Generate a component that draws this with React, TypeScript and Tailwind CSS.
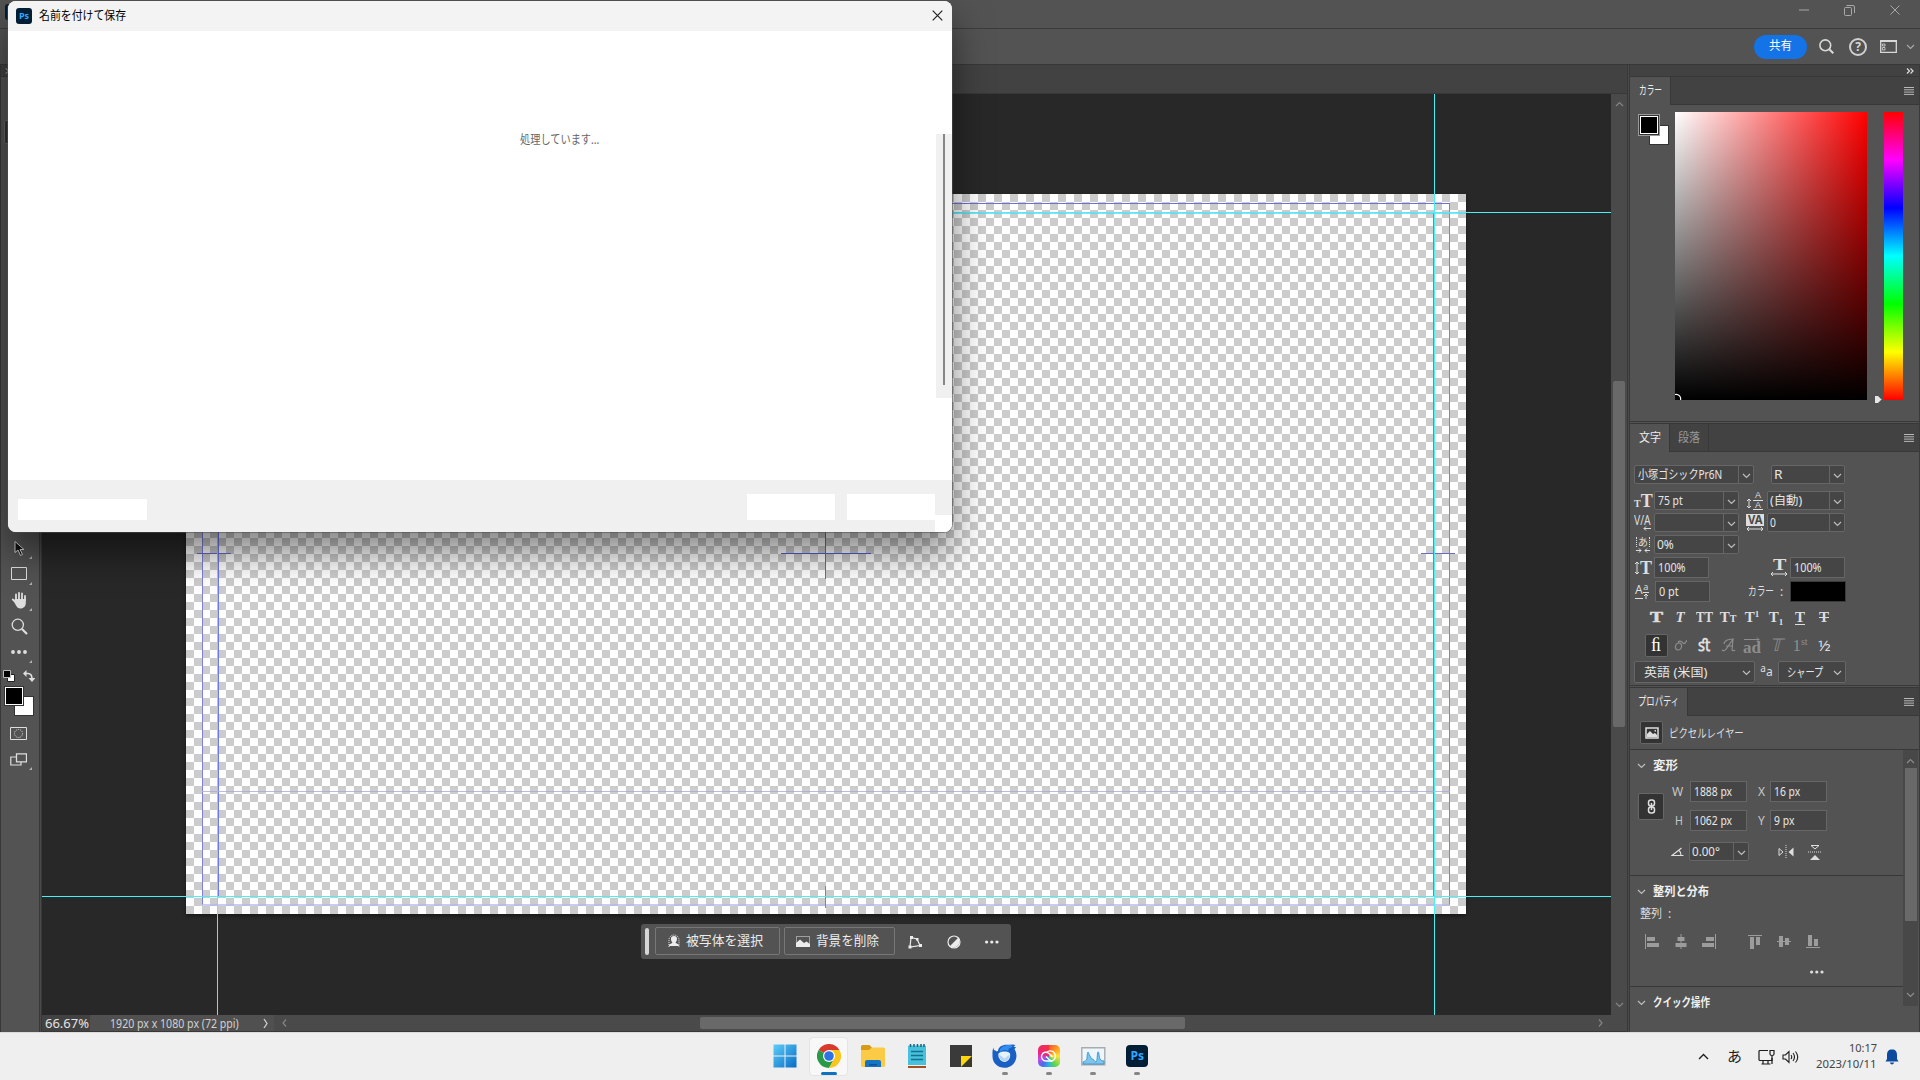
import { useLayoutEffect, useRef, useState } from "react";
import type { ReactNode } from "react";
import clsx from "clsx";

// Single line of text, condensed or stretched to a fixed width.
function Fit({
  w,
  className,
  children,
}: {
  w: number;
  className?: string;
  children: ReactNode;
}) {
  const ref = useRef<HTMLSpanElement>(null);
  const [scale, setScale] = useState(1);

  useLayoutEffect(() => {
    if (ref.current) setScale(w / ref.current.offsetWidth);
  }, [w]);

  return (
    <span
      className={clsx("inline-block shrink-0 whitespace-nowrap", className)}
      style={{ width: w }}
    >
      <span
        ref={ref}
        className="inline-block origin-left"
        style={{ transform: `scaleX(${scale})` }}
      >
        {children}
      </span>
    </span>
  );
}

function Icon({
  w,
  h,
  className,
  children,
}: {
  w: number;
  h: number;
  className?: string;
  children: ReactNode;
}) {
  return (
    <svg
      width={w}
      height={h}
      viewBox={`0 0 ${w} ${h}`}
      fill="none"
      stroke="currentColor"
      className={clsx("block shrink-0", className)}
    >
      {children}
    </svg>
  );
}

function Chevron({ className, up }: { className?: string; up?: boolean }) {
  return (
    <Icon w={9} h={6} className={className}>
      <path d={up ? "M1 5 4.5 1.5 8 5" : "M1 1 4.5 4.5 8 1"} strokeWidth="1.2" />
    </Icon>
  );
}

function PsLogo({ className }: { className?: string }) {
  return (
    <div
      className={clsx(
        "flex items-center justify-center bg-[#001e36] font-['Open_Sans',sans-serif] font-bold text-[#31a8ff]",
        className,
      )}
    >
      Ps
    </div>
  );
}

function Combo({
  className,
  children,
  split = true,
}: {
  className?: string;
  children?: ReactNode;
  split?: boolean;
}) {
  return (
    <div
      className={clsx(
        "flex shrink-0 items-center rounded-[2px] border border-[#666] bg-[#454545] text-[#e6e6e6]",
        className,
      )}
    >
      <div className="flex flex-1 items-center">{children}</div>
      <div
        className={clsx(
          "flex h-full w-[15px] items-center justify-center pt-0.5 text-[#bdbdbd]",
          split && "border-l border-[#666]",
        )}
      >
        <Chevron />
      </div>
    </div>
  );
}

function Field({ className, children }: { className?: string; children: ReactNode }) {
  return (
    <div
      className={clsx(
        "flex h-[21px] shrink-0 items-center border border-[#666] bg-[#454545] pl-[3px] pt-px text-[#e6e6e6]",
        className,
      )}
    >
      {children}
    </div>
  );
}

function PanelTabs({ tabs }: { tabs: { label: string; w: number; box: string; active?: boolean }[] }) {
  return (
    <div className="flex h-7 shrink-0 bg-[#424242]">
      {tabs.map((tab) => (
        <div
          key={tab.label}
          className={clsx(
            "flex items-center justify-center border-r border-[#383838]",
            tab.box,
            tab.active ? "bg-[#535353] text-[#ececec]" : "border-b text-[#9a9a9a]",
          )}
        >
          <Fit w={tab.w}>{tab.label}</Fit>
        </div>
      ))}
      <div className="flex flex-1 items-center justify-end border-b border-[#383838] pr-[5px] text-[#b8b8b8]">
        <Icon w={10} h={8}>
          <path d="M0 .5h10M0 2.8h10M0 5.1h10M0 7.4h10" strokeWidth="1" />
        </Icon>
      </div>
    </div>
  );
}

function ColorPanel() {
  return (
    <div className="flex h-[317px] shrink-0 border-b border-[#383838] pt-[7px]">
      <div className="relative ml-2 mt-0.5 h-8 w-[37px] shrink-0">
        <div className="absolute left-[11px] top-[11px] size-5 border border-[#333] bg-white" />
        <div className="absolute left-0 top-0 size-[22px] border border-[#999] bg-[#333] p-px">
          <div className="size-full border border-white bg-black" />
        </div>
      </div>
      <div className="h-72 w-48 shrink-0 bg-linear-to-r/srgb from-white to-[#f00]">
        <div className="flex size-full items-end bg-linear-to-b/srgb from-transparent to-black">
          <Icon w={8} h={8} className="text-white">
            <path d="M0 2.5a4.5 4.5 0 0 1 5.5 5.5" strokeWidth="1.2" />
          </Icon>
        </div>
      </div>
      <div className="flex h-[292px] w-[17px] shrink-0 items-end justify-end pr-0.5">
        <Icon w={8} h={9}>
          <path d="M.5.500h3.500l4 4-4 4H.5z" fill="#e6e6e6" stroke="#222" strokeWidth=".6" />
        </Icon>
      </div>
      <div className="h-72 w-[19px] bg-[linear-gradient(to_bottom,#f00,#f0f_16.67%,#00f_33.33%,#0ff_50%,#0f0_66.67%,#ff0_83.33%,#f00)]" />
    </div>
  );
}

const serif = "font-['Liberation_Serif',serif] leading-none";

function CharacterPanel() {
  return (
    <div className="h-[234px] shrink-0 border-b border-[#383838] pt-[13px] text-[12px] text-[#dedede]">
      <div className="flex h-[19px]">
        <Combo className="ml-1 h-[19px] w-[120px]">
          <Fit w={84} className="ml-[3px]">小塚ゴシックPr6N</Fit>
        </Combo>
        <Combo className="ml-[17px] h-[19px] w-[74px]">
          <Fit w={8} className="ml-0.5">R</Fit>
        </Combo>
      </div>
      <div className="mt-[7px] flex h-[19px] items-center">
        <div className={clsx("ml-1 flex w-5 items-baseline font-bold", serif)}>
          <span className="text-[10px]">T</span>
          <span className="text-[18px]">T</span>
        </div>
        <Combo className="h-[19px] w-[85px]">
          <Fit w={25} className="ml-[3px]">75 pt</Fit>
        </Combo>
        <div className="ml-[7px] flex w-[21px] items-center">
          <Icon w={6} h={16}>
            <path d="M3 6v9M1 8l2-2 2 2M1 13l2 2 2-2" />
          </Icon>
          <div className="ml-px flex flex-col items-center font-['Liberation_Sans'] text-[9px] leading-[8px]">
            <span>A</span>
            <span className="mt-px w-2.5 border-y border-[#dedede] text-center">A</span>
          </div>
        </div>
        <Combo className="h-[19px] w-[78px]">
          <Fit w={32} className="ml-0.5">(自動)</Fit>
        </Combo>
      </div>
      <div className="mt-[3px] flex h-[19px] items-center">
        <div className="ml-1 flex h-[18px] w-5 flex-col">
          <Fit w={17} className="h-3 text-[14px] leading-[12px]">V/A</Fit>
          <Icon w={17} h={5}>
            <path d="M17 2.500H10M12 .5l-2 2 2 2" />
          </Icon>
        </div>
        <Combo className="h-[19px] w-[85px]" />
        <div className="ml-[7px] w-[21px]">
          <div className="flex h-3 w-[18px] items-center justify-center bg-[#dedede] text-[12px] font-bold text-[#484848]">
            <Fit w={15}>VA</Fit>
          </div>
          <Icon w={18} h={6}>
            <path d="M1 3h16M3 1 1 3l2 2M15 1l2 2-2 2" />
          </Icon>
        </div>
        <Combo className="h-[19px] w-[78px]">
          <Fit w={6} className="ml-0.5">0</Fit>
        </Combo>
      </div>
      <div className="mt-[3px] flex h-[19px] items-center">
        <div className="ml-1.5 w-[18px]">
          <div className="flex h-2.5 w-[14px] items-center justify-center border-x border-dotted border-[#dedede] text-[10px] leading-none">
            あ
          </div>
          <Icon w={14} h={5} className="mt-px">
            <path d="M0 2.5h5M3 .5l2 2-2 2M14 2.5H9M11 .5l-2 2 2 2" />
          </Icon>
        </div>
        <Combo className="h-[19px] w-[85px]">
          <Fit w={17} className="ml-0.5">0%</Fit>
        </Combo>
      </div>
      <div className="mt-[3px] flex h-[21px] items-center">
        <div className={clsx("ml-1 flex w-5 items-center text-[18px] font-bold", serif)}>
          <Icon w={6} h={14}>
            <path d="M3 1v12M1 3l2-2 2 2M1 11l2 2 2-2" />
          </Icon>
          <span>T</span>
        </div>
        <Field className="w-[55px]">
          <Fit w={28}>100%</Fit>
        </Field>
        <div className={clsx("ml-[60px] mr-px flex w-5 flex-col items-center text-[17px] font-bold", serif)}>
          <Fit w={13} className="h-[13px] leading-[14px]">T</Fit>
          <Icon w={18} h={6}>
            <path d="M1 3h16M3 1 1 3l2 2M15 1l2 2-2 2" />
          </Icon>
        </div>
        <Field className="w-[55px]">
          <Fit w={28}>100%</Fit>
        </Field>
      </div>
      <div className="mt-[3px] flex h-[21px] items-center">
        <div className="ml-[5px] flex w-5">
          <span className="border-b border-[#dedede] text-[12px] leading-[11px]">A</span>
          <div className="flex flex-col items-center text-[9px] leading-[6px]">
            <span>a</span>
            <Icon w={6} h={7} className="mt-0.5">
              <path d="M0 .5h6M3 7V2M1 4l2-2 2 2" />
            </Icon>
          </div>
        </div>
        <Field className="w-[55px]">
          <Fit w={20}>0 pt</Fit>
        </Field>
        <Fit w={26} className="ml-[38px]">カラー</Fit>
        <span className="ml-1.5 w-2.5">:</span>
        <div className="h-[21px] w-14 border border-[#3a3a3a] bg-black" />
      </div>
      <div
        className={clsx(
          "ml-[14px] mt-1.5 grid h-[18px] w-48 grid-cols-[repeat(8,24px)] items-center justify-items-center text-[15px] font-bold",
          serif,
        )}
      >
        <Fit w={13} className="[-webkit-text-stroke:0.6px_currentColor]">T</Fit>
        <span className="italic">T</span>
        <Fit w={17}>TT</Fit>
        <span>T<span className="text-[10px]">T</span></span>
        <span className="flex">T<span className="text-[9px]">1</span></span>
        <span className="flex items-end">T<span className="text-[9px] leading-[6px]">1</span></span>
        <span className="border-b border-[#dedede] leading-[14px]">T</span>
        <span className="line-through">T</span>
      </div>
      <div
        className={clsx(
          "ml-[14px] mt-[7px] grid h-6 w-48 grid-cols-[repeat(8,24px)] items-center justify-items-center text-[17px]",
          serif,
        )}
      >
        <div className="flex h-[23px] w-[23px] items-center justify-center rounded-[2px] border border-[#666] bg-[#333] text-[18px] text-white">
          ﬁ
        </div>
        <Icon w={13} h={12} className="text-[#8d8d8d]">
          <path d="M5 4C1 4 0 11 4 11s5-7 1-7c-2-3 3-2 4 0s3-1 4-3" strokeWidth="1.2" />
        </Icon>
        <Fit w={12} className="font-bold">ﬆ</Fit>
        <Icon w={15} h={14} className="text-[#8d8d8d]">
          <path d="M1 12c3 3 6-4 11-11l-1 11c0 1 2 1 3 0M5 8h7M3 6c0-4 6-5 9-5" strokeWidth="1.2" />
        </Icon>
        <span className="flex flex-col items-center font-bold leading-[11px] text-[#8d8d8d]">
          <Icon w={16} h={5}>
            <path d="M0 2.500h15M13 .5l2 2-2 2" />
          </Icon>
          ad
        </span>
        <span className="italic text-[#8d8d8d]">𝕋</span>
        <span className="flex text-[#8d8d8d]">1<span className="text-[10px]">st</span></span>
        <Fit w={13} className="font-['Noto_Sans'] text-[15px]">½</Fit>
      </div>
      <div className="mt-1 flex h-[22px] items-center">
        <Combo split={false} className="ml-1 h-[22px] w-[121px]">
          <Fit w={63} className="ml-[9px] mt-px">英語 (米国)</Fit>
        </Combo>
        <div className="flex w-[23px] items-baseline justify-center leading-none">
          <span className="-translate-y-1 text-[10px]">a</span>
          <span className="text-[12px]">a</span>
        </div>
        <Combo split={false} className="h-[22px] w-[68px]">
          <Fit w={36} className="ml-2 mt-px">シャープ</Fit>
        </Combo>
      </div>
    </div>
  );
}

function SectionTitle({ label, w }: { label: string; w: number }) {
  return (
    <div className="flex h-8 items-center pl-[7px] font-bold text-[#f0f0f0]">
      <Chevron className="mr-[7px] text-[#bdbdbd]" />
      <Fit w={w}>{label}</Fit>
    </div>
  );
}

const alignShapes = [
  { gap: "ml-[15px]", line: "M.5 0v15", bars: "M2 3h8v4H2zM2 9h12v4H2z" },
  { gap: "ml-[15px]", line: "M7 0v15", bars: "M3.500 3h7v4h-7zM1.500 9h11v4h-11z" },
  { gap: "ml-[14px]", line: "M13.500 0v15", bars: "M4 3h8v4H4zM0 9h12v4H0z" },
  { gap: "ml-[32px]", line: "M0 1.500h14", bars: "M2 3h4v12H2zM8 3h4v8H8z" },
  { gap: "ml-[15px]", line: "M0 7.500h14", bars: "M2 2h4v11H2zM8 4h4v7H8z" },
  { gap: "ml-[15px]", line: "M0 13.500h14", bars: "M2 1h4v11H2zM8 5h4v7H8z" },
];

function Dots({ className }: { className?: string }) {
  return (
    <Icon w={14} h={4} className={className}>
      <path
        d="M0 2a1.600 1.600 0 1 0 3.200 0a1.600 1.600 0 1 0-3.200 0M5.200 2a1.600 1.600 0 1 0 3.200 0a1.600 1.600 0 1 0-3.200 0M10.400 2a1.600 1.600 0 1 0 3.200 0a1.600 1.600 0 1 0-3.200 0"
        fill="currentColor"
        stroke="none"
      />
    </Icon>
  );
}

function PropertiesPanel() {
  return (
    <div className="flex flex-1 flex-col text-[12px] text-[#dedede]">
      <div className="flex h-[34px] shrink-0 items-center border-b border-[#383838]">
        <div className="ml-2.5 flex size-[23px] items-center justify-center rounded-[2px] border border-[#666] bg-[#333]">
          <Icon w={14} h={12}>
            <path d="M1 1h12v10H1z" strokeWidth="1.500" />
            <path d="M2 10V7l3-3 3 3 2-1 2 2v2zM9.500 3h1.500v1.500H9.500z" fill="currentColor" stroke="none" />
          </Icon>
        </div>
        <Fit w={75} className="ml-1.5 mt-0.5">ピクセルレイヤー</Fit>
      </div>
      <div className="flex flex-1">
        <div className="w-[273px]">
          <div className="h-[126px] border-b border-[#383838]">
            <SectionTitle label="変形" w={25} />
            <div className="-mt-px flex">
              <div className="ml-2 mt-3 flex h-[27px] w-[26px] items-center justify-center rounded-[2px] border border-[#666] bg-[#333]">
                <Icon w={9} h={15}>
                  <rect x="1.500" y="1" width="6" height="6" rx="2.500" strokeWidth="1.500" />
                  <rect x="1.500" y="8" width="6" height="6" rx="2.500" strokeWidth="1.500" />
                  <path d="M4.500 4v7" strokeWidth="1.500" />
                </Icon>
              </div>
              <div className="ml-2 flex flex-col gap-2">
                <div className="flex items-center">
                  <Fit w={11} className="mr-[7px] text-[#c8c8c8]">W</Fit>
                  <Field className="w-[57px]"><Fit w={38}>1888 px</Fit></Field>
                  <Fit w={7} className="ml-[11px] mr-[5px] text-[#c8c8c8]">X</Fit>
                  <Field className="w-[57px]"><Fit w={26}>16 px</Fit></Field>
                </div>
                <div className="flex items-center">
                  <Fit w={8} className="ml-[3px] mr-[7px] text-[#c8c8c8]">H</Fit>
                  <Field className="w-[57px]"><Fit w={38}>1062 px</Fit></Field>
                  <Fit w={7} className="ml-[11px] mr-[5px] text-[#c8c8c8]">Y</Fit>
                  <Field className="w-[57px]"><Fit w={20}>9 px</Fit></Field>
                </div>
              </div>
            </div>
            <div className="mt-[11px] flex h-[19px] items-center">
              <Icon w={13} h={11} className="ml-[41px]">
                <path d="M12.500 9.500H1L10.500 2M8 4.500c1.500 1 2 3 2 5" strokeWidth="1.200" />
              </Icon>
              <Combo className="ml-[5px] h-[19px] w-[60px]">
                <Fit w={28} className="ml-0.5">0.00°</Fit>
              </Combo>
              <Icon w={16} h={14} className="ml-[29px]">
                <path d="M1 3.500v7L5 7z" />
                <path d="M15.500 2.500v9L10.500 7z" fill="currentColor" stroke="none" />
                <path d="M8 0v14" strokeDasharray="1 1" />
              </Icon>
              <Icon w={14} h={16} className="ml-3.5">
                <path d="M3 1.500h8L7 5z" />
                <path d="M2 16h10L7 11z" fill="currentColor" stroke="none" />
                <path d="M0 8h14" strokeDasharray="1 1" />
              </Icon>
            </div>
          </div>
          <div className="h-[111px] border-b border-[#383838]">
            <SectionTitle label="整列と分布" w={56} />
            <div className="-mt-1 flex h-5 items-center pl-2.5">
              <Fit w={22}>整列</Fit>
              <span className="ml-1.5">:</span>
            </div>
            <div className="mt-2.5 flex text-[#9c9c9c]">
              {alignShapes.map((shape) => (
                <Icon key={shape.line + shape.bars} w={14} h={15} className={shape.gap}>
                  <path d={shape.line} />
                  <path d={shape.bars} fill="currentColor" stroke="none" />
                </Icon>
              ))}
            </div>
            <Dots className="ml-[180px] mt-[21px]" />
          </div>
          <SectionTitle label="クイック操作" w={57} />
        </div>
        <div className="flex h-64 w-[15px] flex-col items-center bg-[#484848] py-2 text-[#8c8c8c]">
          <Chevron up />
          <div className="mt-1 h-[153px] w-3 bg-[#696969]" />
          <Chevron className="mt-auto" />
        </div>
      </div>
    </div>
  );
}

function Dock() {
  return (
    <div className="flex w-[290px] shrink-0 flex-col border-r border-[#3a3a3a] bg-[#535353] text-[12px]">
      <div className="flex h-3 shrink-0 items-center justify-end border-b border-[#383838] bg-[#424242] pr-[5px] text-[#dedede]">
        <Icon w={8} h={6}>
          <path d="M1 .5 3.500 3 1 5.500M4.500 .5 7 3 4.500 5.500" strokeWidth="1.200" />
        </Icon>
      </div>
      <PanelTabs tabs={[{ label: "カラー", w: 23, box: "w-[41px]", active: true }]} />
      <ColorPanel />
      <div className="h-0.5 shrink-0 border-b border-[#383838] bg-[#535353]" />
      <PanelTabs
        tabs={[
          { label: "文字", w: 22, box: "w-[40px]", active: true },
          { label: "段落", w: 22, box: "w-[39px]" },
        ]}
      />
      <CharacterPanel />
      <div className="h-0.5 shrink-0 border-b border-[#383838] bg-[#535353]" />
      <PanelTabs tabs={[{ label: "プロパティ", w: 41, box: "w-[58px]", active: true }]} />
      <PropertiesPanel />
    </div>
  );
}

function ToolSlot({ className, children }: { className?: string; children: ReactNode }) {
  return (
    <div className={clsx("relative flex h-[26px] w-full items-center pl-2.5 text-[#dedede]", className)}>
      {children}
      <Icon w={3} h={3} className="absolute bottom-0.5 right-[7px] text-[#b0b0b0]">
        <path d="M3 0v3H0z" fill="currentColor" stroke="none" />
      </Icon>
    </div>
  );
}

function Toolbar() {
  return (
    <div className="flex w-[42px] shrink-0 border-l border-[#383838]">
      <div className="flex w-[38px] flex-col bg-[#535353]">
        <div className="flex h-3 items-center border-b border-[#383838] bg-[#424242] pl-1 text-[#dedede]">
          <Icon w={8} h={6}>
            <path d="M1 .5 3.500 3 1 5.500M4.500 .5 7 3 4.500 5.500" />
          </Icon>
        </div>
        <div className="ml-[3px] mt-[43px] h-6 w-8 rounded-[2px] border border-[#666] bg-[#333]" />
        <ToolSlot className="mt-[391px]">
          <Icon w={12} h={18} className="ml-[3px] mt-0.5">
            <path d="M1 1.500v11l3-2.500 2.500 5.500 2-1-2.500-5h4z" fill="#111" stroke="#cfcfcf" />
          </Icon>
        </ToolSlot>
        <ToolSlot>
          <Icon w={17} h={14}>
            <path d="M.5.5h15v12H.5z" />
          </Icon>
        </ToolSlot>
        <ToolSlot>
          <Icon w={17} h={18}>
            <path d="M5 9V3.500M8 8V1.800M11 8V2.500M14 9.500V5M6 12 1.800 8.500" strokeWidth="1.800" strokeLinecap="round" />
            <path d="M4.100 8h10.700v4c0 3-2 5.500-5.500 5.500C6 17.500 5 14 2.500 10z" fill="currentColor" stroke="none" />
          </Icon>
        </ToolSlot>
        <div className="flex h-[26px] items-center pl-2.5 text-[#dedede]">
          <Icon w={17} h={17}>
            <circle cx="6.800" cy="6.800" r="5.600" strokeWidth="1.300" />
            <path d="m11 11 5 5" strokeWidth="2.200" />
          </Icon>
        </div>
        <ToolSlot>
          <Icon w={17} h={4}>
            <path d="M2 2h.01M8 2h.01M14 2h.01" strokeWidth="3.800" strokeLinecap="round" />
          </Icon>
        </ToolSlot>
        <div className="mt-px flex h-[18px] items-center pl-0.5 pt-px text-[#dedede]">
          <Icon w={12} h={12}>
            <path d="M4.500 4.500h7v7h-7z" fill="#fff" stroke="#222" />
            <path d="M.5.5h7v7h-7z" fill="#000" stroke="#bbb" />
          </Icon>
          <Icon w={12} h={12} className="ml-2">
            <path d="M2 3.500h3c3 0 4 2 4 5.500" strokeWidth="1.600" />
            <path d="M3.500 0v7L0 3.500zM5.500 8h7L9 12z" fill="currentColor" stroke="none" />
          </Icon>
        </div>
        <div className="relative ml-[3px] mt-0.5 h-[30px] w-[30px] shrink-0">
          <div className="absolute bottom-0 right-0 size-5 border border-[#333] bg-white" />
          <div className="absolute left-0 top-0 size-5 border border-[#333] bg-white p-px">
            <div className="size-full bg-black" />
          </div>
        </div>
        <div className="mt-1 flex h-[26px] items-center pl-[9px] text-[#dedede]">
          <Icon w={17} h={13}>
            <path d="M.5.5h16v12H.5z" />
            <circle cx="8.500" cy="6.500" r="4" strokeDasharray="1 1" />
          </Icon>
        </div>
        <ToolSlot>
          <Icon w={17} h={13} className="-ml-px">
            <path d="M6 4H.8v8H11V9" strokeWidth="1.200" />
            <path d="M6.500.8h10v8h-10z" strokeWidth="1.300" />
          </Icon>
        </ToolSlot>
      </div>
      <div className="w-[3px] border-x border-[#383838] bg-[#4a4a4a]" />
    </div>
  );
}

const guideClasses = [
  // print-safe lines
  "left-[160px] top-[109px] w-px h-[702px] bg-[#8080dc]",
  "left-[176px] top-[118px] w-px h-[684px] bg-[#6f7be8]",
  "left-[1391px] top-[118px] w-px h-[684px] bg-[#5f86e8]",
  "left-[1407px] top-[109px] w-px h-[702px] bg-[#8080dc]",
  "left-[160px] top-[109px] w-[1248px] h-px bg-[#7070dc]",
  "left-[160px] top-[810px] w-[1248px] h-[2px] bg-[#b4b4ec]/70",
  "left-[160px] top-[697px] w-[1248px] h-px bg-[#a9a9dc]/80",
  // centre marks
  "left-[739px] top-[459px] w-[90px] h-px bg-[#5560d8]",
  "left-[783px] top-[436px] w-px h-[49px] bg-[#6068dc]",
  "left-[783px] top-[792px] w-px h-[22px] bg-[#7a7ae0]",
  "left-[155px] top-[459px] w-[34px] h-px bg-[#6a6ac8]",
  "left-[1379px] top-[459px] w-[34px] h-px bg-[#6a6ac8]",
  // guides
  "left-0 top-[118px] w-full h-px bg-[#4af0f4]",
  "left-[144px] top-[119px] w-[1280px] h-px bg-[#5fd0f4]/70",
  "left-0 top-[802px] w-full h-px bg-[#4af0f4]",
  "left-[175px] top-0 w-px h-full bg-[#4af0f4]",
  "left-[1392px] top-0 w-px h-full bg-[#4af0f4]",
];

function ContextBar() {
  return (
    <div className="absolute left-[599px] top-[830px] flex h-[35px] w-[370px] items-center rounded-[3px] bg-[#535353] text-[13px] text-[#ececec]">
      <div className="ml-1 h-[27px] w-1 rounded-[2px] bg-[#d6d6d6]" />
      <div className="-mt-px ml-1.5 flex h-7 w-[125px] items-center rounded-[2px] border border-[#777] pl-[11px]">
        <Icon w={14} h={14}>
          <path d="M2 13V6a5 5 0 0 1 10 0v7" strokeDasharray="1 1" />
          <path d="M7 2c4 0 3.500 4.500 1.500 6.500 0 1 3.500 1 3.500 3.500H2C2 9.500 5.500 9.500 5.500 8.500 3.500 6.500 3 2 7 2" fill="currentColor" stroke="none" />
        </Icon>
        <Fit w={77} className="ml-[5px]">被写体を選択</Fit>
      </div>
      <div className="-mt-px ml-1 flex h-7 w-[111px] items-center rounded-[2px] border border-[#777] pl-[11px]">
        <Icon w={14} h={11}>
          <path d="M.5.5h13v10H.5z" strokeDasharray="1 1" />
          <path d="M0 11V7l4-3.500L8 7l2.500-1.500L14 8v3z" fill="currentColor" stroke="none" />
        </Icon>
        <Fit w={63} className="ml-1.5">背景を削除</Fit>
      </div>
      <Icon w={14} h={14} className="ml-[13px]">
        <path d="M3 2.500 2 12l10-1.500L9 4z" strokeWidth="1.200" />
        <path d="M2 1h3v3H2zM8 3h2.500v2.500H8zM.5 10.500h3v3h-3zM11 9h3v3h-3z" fill="currentColor" stroke="none" />
      </Icon>
      <Icon w={14} h={14} className="ml-[25px]">
        <circle cx="7" cy="7" r="6" strokeWidth="1.200" />
        <path d="M11.200 2.800a6 6 0 0 1-8.400 8.400z" fill="currentColor" stroke="none" />
      </Icon>
      <Dots className="ml-6" />
    </div>
  );
}

function Document() {
  return (
    <div className="flex w-[1585px] shrink-0 flex-col">
      <div className="h-[29px] border-b border-[#383838] bg-[#424242]" />
      <div className="flex h-[921px]">
        <div className="relative w-[1569px] overflow-hidden bg-[#282828]">
          <div className="absolute left-36 top-[100px] h-[720px] w-[1280px] bg-[repeating-conic-gradient(#fff_0_25%,#ccc_0_50%)] bg-size-[16px_16px] shadow-[0_2px_4px_rgba(0,0,0,0.4)] -scale-x-100" />
          {guideClasses.map((guide) => (
            <div key={guide} className={clsx("absolute", guide)} />
          ))}
          <ContextBar />
        </div>
        <div className="flex w-4 flex-col items-center bg-[#4a4a4a] text-[#858585]">
          <Chevron up className="mt-[7px]" />
          <div className="mt-[274px] h-[346px] w-3 rounded-[2px] bg-[#696969]" />
          <Chevron className="mb-[7px] mt-auto" />
        </div>
      </div>
      <div className="flex h-[17px] items-center border-b border-[#383838] bg-[#4a4a4a] text-[#d0d0d0]">
        <div className="flex h-full w-12 items-center bg-[#424242] pl-[3px] pt-0.5 text-[13px] text-[#e4e4e4]">
          <Fit w={44}>66.67%</Fit>
        </div>
        <div className="flex h-full w-[184px] items-center bg-[#505050] pl-5 pt-px text-[12px]">
          <Fit w={129}>1920 px x 1080 px (72 ppi)</Fit>
          <Icon w={5} h={11} className="ml-6">
            <path d="m1 1 3 4.500L1 10" strokeWidth="1.300" />
          </Icon>
        </div>
        <Icon w={5} h={8} className="ml-2 text-[#858585]">
          <path d="M4 .5 1 4l3 3.500" strokeWidth="1.200" />
        </Icon>
        <div className="ml-[413px] h-3 w-[485px] rounded-[2px] bg-[#696969]" />
        <Icon w={5} h={8} className="ml-[413px] text-[#858585]">
          <path d="m1 .5 3 3.500-3 3.500" strokeWidth="1.200" />
        </Icon>
      </div>
    </div>
  );
}

function SaveDialog() {
  return (
    <div className="absolute left-2 top-px flex h-[531px] w-[944px] flex-col overflow-hidden rounded-lg bg-white shadow-[0_0_0_1px_rgba(80,80,80,0.55),0_20px_38px_rgba(0,0,0,0.5)]">
      <div className="flex h-[30px] shrink-0 items-center bg-[#f3f3f3] px-2 pb-px text-[12px] text-black">
        <PsLogo className="size-4 rounded-[3px] text-[9px]" />
        <Fit w={87} className="ml-[7px]">名前を付けて保存</Fit>
        <Icon w={11} h={11} className="ml-auto mr-px text-[#222]">
          <path d="m.7.7 9.600 9.600M10.300.7.7 10.300" strokeWidth="1.200" />
        </Icon>
      </div>
      <div className="flex h-[449px] shrink-0 justify-end">
        <div className="flex-1 pl-[512px] pt-[100px] text-[12px] text-[#666]">
          <Fit w={79}>処理しています...</Fit>
        </div>
        <div className="mt-[103px] h-[264px] w-4 bg-[#f0f0f0] pl-[7px]">
          <div className="h-[251px] w-0.5 bg-[#868686]" />
        </div>
      </div>
      <div className="flex flex-1 bg-[#f0f0f0]">
        <div className="ml-2.5 mt-[19px] h-[21px] w-[129px] bg-white" />
        <div className="ml-[600px] mt-3.5 h-[26px] w-[88px] bg-white" />
        <div className="ml-3 mt-3.5 h-[26px] w-[88px] bg-white" />
        <div className="mt-[35px] flex-1 bg-white" />
      </div>
    </div>
  );
}

function StartIcon() {
  return (
    <Icon w={24} h={24} className="text-[#0078d4]">
      <defs>
        <linearGradient id="win" gradientUnits="userSpaceOnUse" x1="0" y1="0" x2="24" y2="24">
          <stop offset="0" stopColor="#5fd0fa" />
          <stop offset="1" stopColor="#0669c4" />
        </linearGradient>
      </defs>
      <path d="M.5.5h11v11H.5zM12.500.5h11v11h-11zM.5 12.500h11v11H.5zM12.500 12.500h11v11h-11z" fill="url(#win)" stroke="none" />
    </Icon>
  );
}

function ChromeIcon() {
  return (
    <Icon w={24} h={24}>
      <g stroke="none">
        <path d="M12 12 1.600 6A12 12 0 0 1 22.400 6z" fill="#d93a2e" />
        <path d="M12 12 1.600 6A12 12 0 0 0 12 24l5.200-9z" fill="#2b9a48" />
        <path d="M12 6h10.400A12 12 0 0 1 12 24l5.200-9z" fill="#fbc51b" />
        <circle cx="12" cy="12" r="6" fill="#fff" />
        <circle cx="12" cy="12" r="4.800" fill="#2f72e4" />
      </g>
    </Icon>
  );
}

function FolderIcon() {
  return (
    <Icon w={24} h={22}>
      <g stroke="none">
        <path d="M0 1.500Q0 0 1.500 0h7l2.500 2.500V8H0z" fill="#d79b18" />
        <path d="M0 5h8l3-2.500h11.500Q24 2.500 24 4v16.500q0 1.500-1.500 1.500h-21Q0 22 0 20.500z" fill="#fbcb45" />
        <path d="M4 22v-5q0-2 2-2h12q2 0 2 2v5z" fill="#1673c2" />
        <path d="M8 19h8v1.500H8z" fill="#0c529a" />
      </g>
    </Icon>
  );
}

function NotepadIcon() {
  return (
    <Icon w={20} h={24}>
      <g stroke="none">
        <rect x="1" y="1.500" width="18" height="20" rx="1" fill="#46c0dc" />
        <path d="M1 21.500h18V24H1z" fill="#a4501c" />
        <path d="M1 21h18v1H1z" fill="#eee" />
      </g>
      <path d="M3.500 0v3M7 0v3M10.500 0v3M14 0v3M17 0v3" stroke="#1b6480" strokeWidth="1.500" />
      <path d="M4 7.500h12M4 11.500h12M4 15.500h12" stroke="#14708c" strokeWidth="1.600" />
    </Icon>
  );
}

function StickyIcon() {
  return (
    <Icon w={22} h={22}>
      <g stroke="none">
        <path d="M0 0h22v11L11 22H0z" fill="#3b3a3a" />
        <path d="M11 11h11L11 22z" fill="#ffd60a" />
        <path d="M22 11v11H11z" fill="#3b3a2a" />
      </g>
    </Icon>
  );
}

function ThunderbirdIcon() {
  return (
    <Icon w={25} h={24}>
      <g stroke="none">
        <path d="M1.500 3.500c0 2 .5 3 2 3 .5 1 1.500 1 2.500.5C6.500 3 10 .8 14.500.8c3 0 7-1 9 .2L21.500 2.500l2.500.7L22.500 5c2.500 4 2.500 9 .5 12.500-2 4-6 6.300-10.500 6.300C6 23.800.5 19 .5 12.500c0-3.500-.3-6 1-9" fill="#1a5fc4" />
        <path d="M9 4c3-3 8-3.500 11-2.500 1 1 0 2-2 2.500-2 1-2 2-1.500 3.500-3-2.500-6-1.500-8.500.5C7.500 6.500 8 5 9 4" fill="#2f8ff0" />
        <path d="M6.500 9.500C8 8 10 7.500 12.500 7.500S17 8 18 9.500c1 4-1.500 8-5.500 8.500-4-.5-7-4.500-6-8.500" fill="#e6f2fe" />
        <path d="m7 10.500 5.500 4 5-4c0 4-2 6.500-5 7-3-.5-5.500-3-5.500-7" fill="#b5d4f5" />
      </g>
    </Icon>
  );
}

function CreativeCloudIcon() {
  return (
    <div className="flex size-[22px] items-center justify-center rounded-[5px] bg-[conic-gradient(from_0deg,#f6503a,#ff9a1c,#ffe23a_25%,#61d64c_40%,#27b7d8_50%,#4a6df0_60%,#c04be0_70%,#ec2680_80%,#f6303a)] text-white">
      <Icon w={18} h={14}>
        <path d="M12 12H6a4.400 4.400 0 1 1 3-7.500l3.500 3.500" strokeWidth="1.400" />
        <path d="M6.500 3.500A5.200 5.200 0 1 1 12 12c-1.800 0-2.500-.7-6-4.500" strokeWidth="1.400" />
      </Icon>
    </div>
  );
}

function MonitorIcon() {
  return (
    <Icon w={25} h={19}>
      <path d="M.8.8h23v17H.8z" fill="#eef6fb" stroke="#a5acb2" strokeWidth="1.400" />
      <path d="M2 15c2-1 3-1 4-3 0-3 .5-7 1-7s1 3 2 4 1 3 2.500 3 2 3 3.500 3S16 6 17 5s1 5 2 7 2 1.500 4 2v3H2z" fill="#7fc4ec" stroke="#3a93cf" strokeWidth=".9" />
    </Icon>
  );
}

const apps = [
  { name: "start", icon: <StartIcon /> },
  { name: "chrome", icon: <ChromeIcon />, active: true },
  { name: "explorer", icon: <FolderIcon /> },
  { name: "notepad", icon: <NotepadIcon /> },
  { name: "sticky", icon: <StickyIcon /> },
  { name: "thunderbird", icon: <ThunderbirdIcon />, running: true },
  { name: "creative-cloud", icon: <CreativeCloudIcon />, running: true },
  { name: "monitor", icon: <MonitorIcon />, running: true },
  {
    name: "photoshop",
    icon: <PsLogo className="size-[22px] rounded-[4px] text-[12px]" />,
    running: true,
  },
];

function Taskbar() {
  return (
    <div className="flex h-12 shrink-0 items-center border-t border-[#dcdcdc] bg-[#efefef] text-[#1c1c1c]">
      <div className="ml-[765px] flex gap-[5.100px]">
        {apps.map((app) => (
          <div
            key={app.name}
            className={clsx(
              "relative flex size-[39px] items-center justify-center rounded-[4px] border pb-px",
              app.active ? "border-[#e4e4e4] bg-[#f8f8f8]" : "border-transparent",
            )}
          >
            {app.icon}
            {app.active && (
              <div className="absolute bottom-0 h-[3px] w-4 rounded-full bg-[#0e72c0]" />
            )}
            {app.running && (
              <div className="absolute bottom-0 h-[3px] w-1.5 rounded-full bg-[#858585]" />
            )}
          </div>
        ))}
      </div>
      <Icon w={11} h={7} className="ml-auto">
        <path d="m1 6 4.500-4.500L10 6" strokeWidth="1.300" />
      </Icon>
      <span className="ml-[18px] text-[15px] leading-none">あ</span>
      <Icon w={17} h={16} className="ml-4">
        <path d="M10 1.500H2q-1 0-1 1v8q0 1 1 1h12V9M5 12v3M10 12v3M3.500 15h9" strokeWidth="1.200" />
        <path d="M12 1.500h4V5q0 1.500-2 1.500T12 5zM14 7v8" strokeWidth="1.200" />
      </Icon>
      <Icon w={17} h={14} className="ml-[7px]">
        <path d="M1 5h2.500L7 1.500v11L3.500 9H1zM9 5q1.500 2 0 4M11 3q3 4 0 8M13.500 1.500q4.500 5.500 0 11" strokeWidth="1.100" />
      </Icon>
      <div className="-mt-px ml-[17px] flex w-[61px] flex-col items-end text-[11px] leading-4 text-[#444]">
        <Fit w={28}>10:17</Fit>
        <Fit w={61}>2023/10/11</Fit>
      </div>
      <Icon w={14} h={16} className="ml-2 mr-[21px] text-[#0b4a9e]">
        <path d="M7 .5c3.500 0 5 2 5 5.500v4l1.500 2.500H.5L2 10V6C2 2.500 3.500.5 7 .5M4.800 13.500h4.400Q8.500 15.500 7 15.500t-2.200-2" fill="currentColor" stroke="none" />
      </Icon>
    </div>
  );
}

export default function App() {
  return (
    <div className="relative flex h-[1080px] w-[1920px] flex-col overflow-hidden bg-[#535353] font-['Noto_Sans','Noto_Sans_CJK_JP',sans-serif]">
      <div className="flex h-[29px] shrink-0 justify-between border-b border-[#3c3c3c]">
        <PsLogo className="ml-[5px] mt-1 size-4 rounded-[3px] text-[9px]" />
        <div className="flex h-5 items-center text-[#a8a8a8]">
          <Icon w={10} h={2}>
            <path d="M0 1h10" />
          </Icon>
          <Icon w={11} h={11} className="ml-[35px]">
            <path d="M.5 3.500q0-1 1-1h5q1 0 1 1v6q0 1-1 1h-5q-1 0-1-1zM2.500.5h6.500q1.500 0 1.500 1.500v6" />
          </Icon>
          <Icon w={10} h={10} className="ml-[35px] mr-5">
            <path d="m.5.5 9 9M9.500.5l-9 9" />
          </Icon>
        </div>
      </div>
      <div className="flex h-9 shrink-0 items-center border-b border-[#383838] text-[#d8d8d8]">
        <div className="ml-auto flex h-6 w-[53px] items-center justify-center rounded-full bg-[#1473e6] pb-0.5 text-[12px] text-white">
          <Fit w={23}>共有</Fit>
        </div>
        <Icon w={15} h={15} className="ml-3">
          <circle cx="6.300" cy="6.300" r="5.400" strokeWidth="1.600" />
          <path d="m10.300 10.300 4 4" strokeWidth="2" />
        </Icon>
        <div className="ml-[15px] flex size-[18px] items-center justify-center rounded-full border-2 border-[#d0d0d0] text-[12px] font-bold leading-none">
          ?
        </div>
        <Icon w={17} h={13} className="ml-[13px]">
          <path d="M.7.7h15.600v11.600H.7z" strokeWidth="1.300" />
          <path d="M0 1h17" strokeWidth="2" />
          <path d="M2.500 4H5v2H2.500zM2.500 7.500H5V10H2.500z" strokeWidth=".8" />
        </Icon>
        <Chevron className="ml-[9px] mr-[5px] text-[#a8a8a8]" />
      </div>
      <div className="flex h-[967px] shrink-0">
        <Toolbar />
        <Document />
        <div className="w-[3px] shrink-0 border-x border-[#383838] bg-[#4a4a4a]" />
        <Dock />
      </div>
      <Taskbar />
      <SaveDialog />
    </div>
  );
}
